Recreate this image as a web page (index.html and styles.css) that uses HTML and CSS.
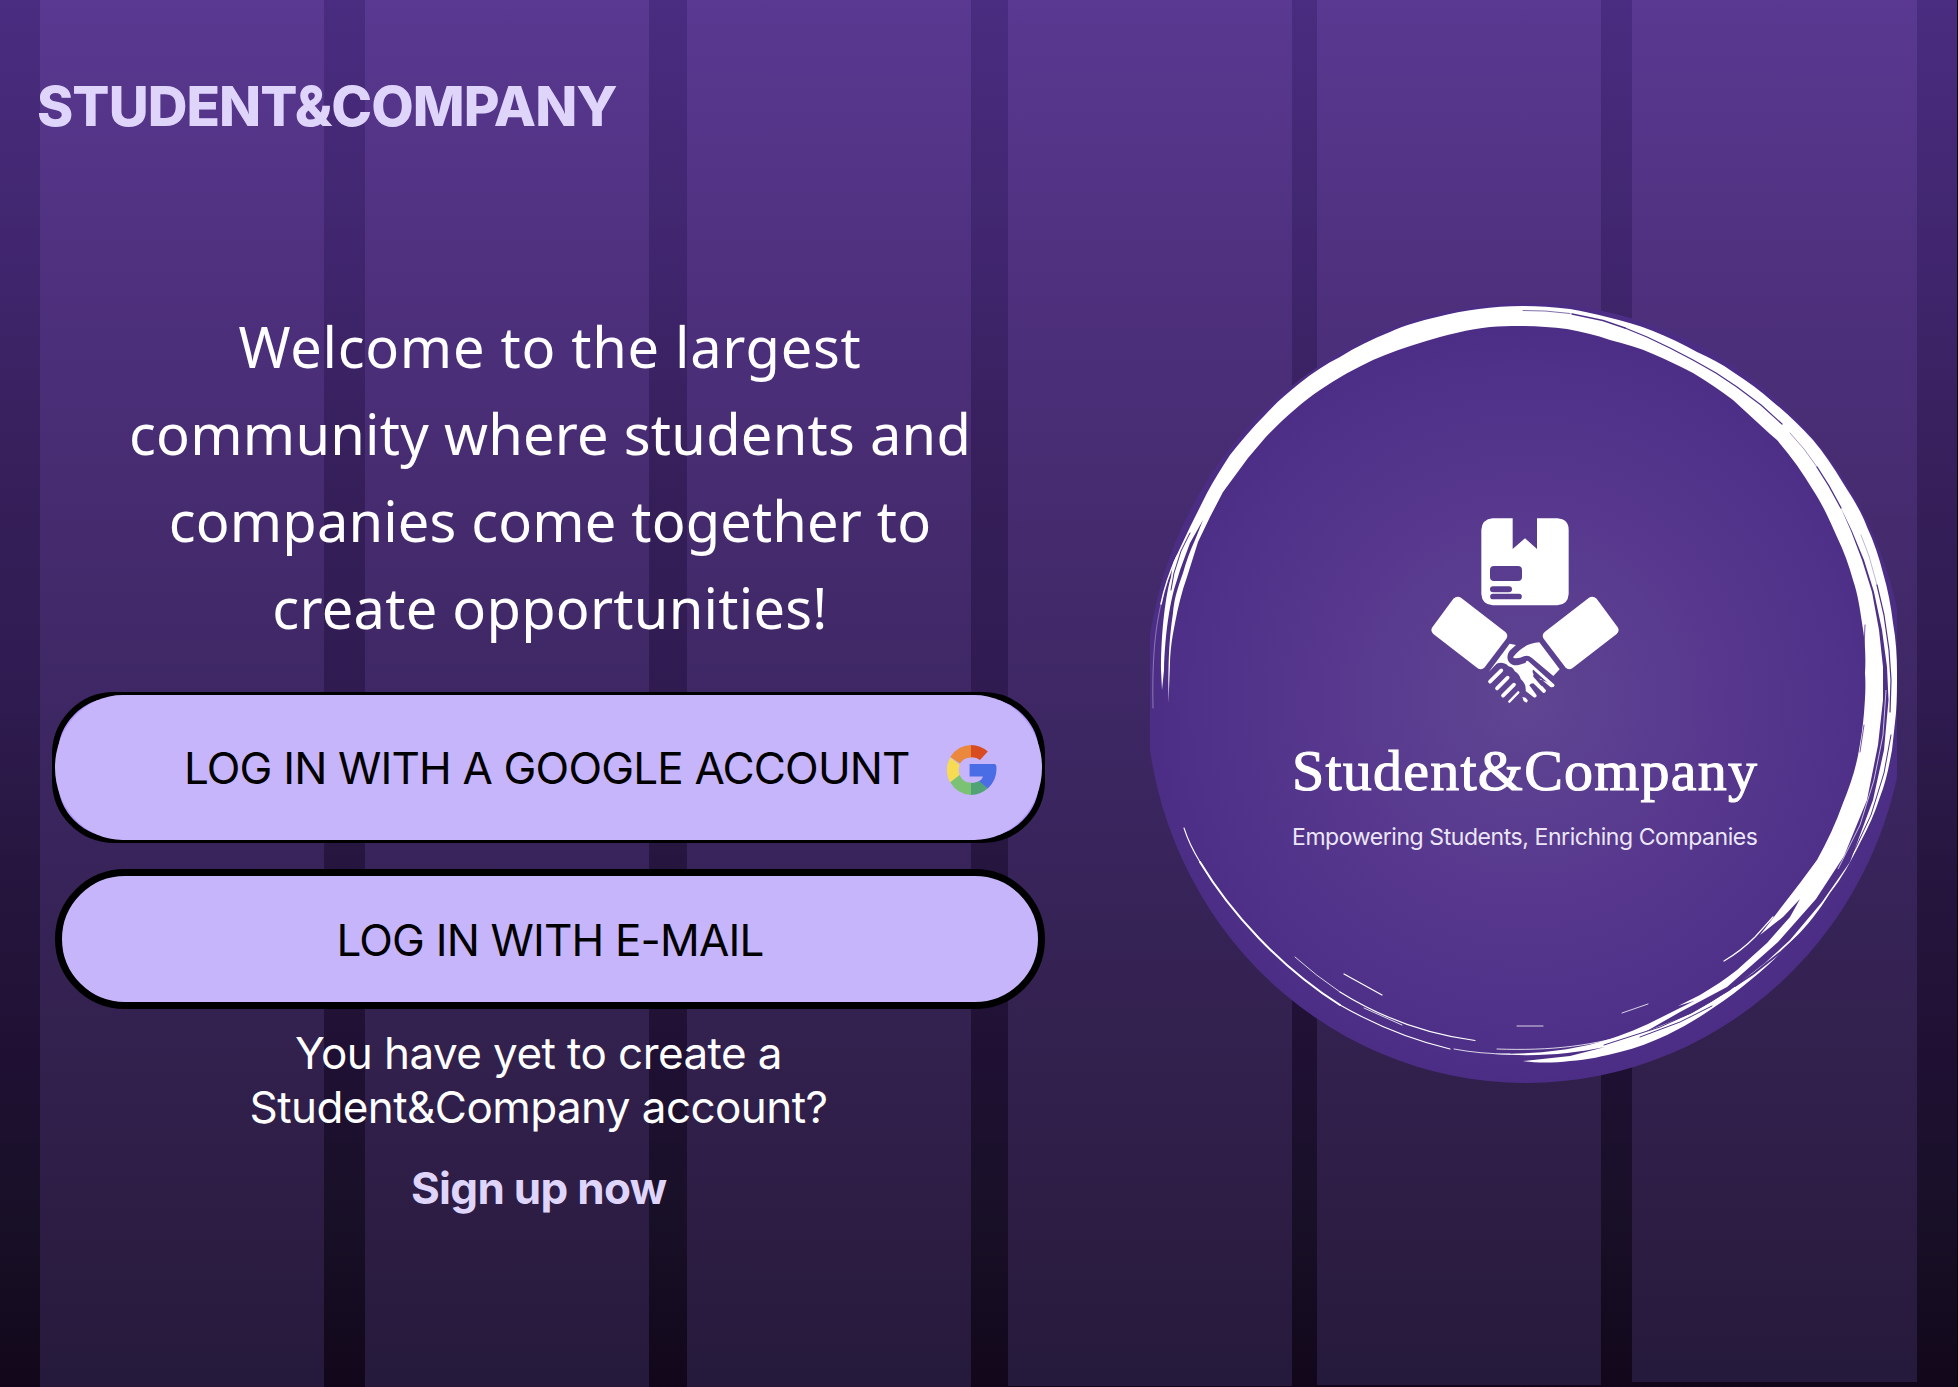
FILE: index.html
```
<!DOCTYPE html>
<html lang="en">
<head>
<meta charset="utf-8">
<title>Student&amp;Company</title>
<link rel="stylesheet" href="styles.css">
</head>
<body>
<div class="page">
  <main class="login">
    <h1 class="brand">STUDENT&amp;COMPANY</h1>
    <p class="welcome">
      <span class="w1">Welcome to the largest</span>
      <span class="w2">community where students and</span>
      <span class="w3">companies come together to</span>
      <span class="w4">create opportunities!</span>
    </p>
    <button class="btn btn-google"><span>LOG IN WITH A GOOGLE ACCOUNT</span>
      <svg class="g-icon" viewBox="-25 -25 50 50">
        <path fill="#ea883e" d="M0-25A25 25 0 0 0-20.7-13L-11-6.6A12.6 12.6 0 0 1 0-12.6Z"/>
        <path fill="#d94c22" d="M0-25A25 25 0 0 1 16.8-18.4L9-10A12.6 12.6 0 0 0 0-12.6Z"/>
        <path fill="#f7dc53" d="M-20.7-12.6A25 25 0 0 0-20.7 12.6L-11.3 5A12.6 12.6 0 0 1-11.3-5Z"/>
        <path fill="#7cc274" d="M-20.7 12.3A25 25 0 0 0 0 25V12.8A12.6 12.6 0 0 1-11.3 5Z"/>
        <path fill="#51a376" d="M0 25A25 25 0 0 0 16.6 18.6L8.5 10.8A13 13 0 0 1 0 12.8Z"/>
        <path fill="#4a6de5" d="M-1.4-6H23.5Q25.3-6 25.4-3.500C26 6 22.500 13.500 16.600 18.600L8.200 11.300Q11.200 9.500 12 6.400H-1.400Z"/>
      </svg>
    </button>
    <button class="btn btn-mail"><span>LOG IN WITH E-MAIL</span></button>
    <p class="hint"><span>You have yet to create a</span><span>Student&amp;Company account?</span></p>
    <a class="signup">Sign up now</a>
  </main>
  <aside class="badge">
    <svg viewBox="1150 300 750 785" width="750" height="785">
      <defs>
        <radialGradient id="disc" gradientUnits="userSpaceOnUse" cx="1525" cy="700" r="385">
          <stop offset="0" stop-color="#5f4592"/><stop offset=".5" stop-color="#57388e"/>
          <stop offset=".85" stop-color="#4f3189"/><stop offset="1" stop-color="#4c2d85"/>
        </radialGradient>
        <clipPath id="sides"><rect x="1150" y="300" width="747" height="790"/></clipPath>
      </defs>
      <ellipse cx="1526" cy="693" rx="380" ry="390" fill="url(#disc)" clip-path="url(#sides)"/>

      <!-- brush ring -->
      <path fill="#fff" d="M1523 306C1492 306 1465 310 1437 317C1420 321 1405 325 1390 332C1372 339 1356 347 1340 357C1326 364 1312 373 1300 383C1287 393 1276 403 1265 415C1252 428 1241 441 1230 455C1222 467 1214 480 1207 493L1190 527L1173 563L1171 577C1166 593 1161 630 1161 670L1162 690L1164 670C1165 633 1170 600 1177 580C1181 566 1186 554 1190 543L1203 520L1195 540C1190 551 1186 562 1183 573C1177 590 1174 600 1173 613C1170 634 1168 652 1168.500 703L1170 663C1171 640 1174 630 1175 623C1178 607 1182 591 1187 577L1198 542L1210 517L1223 492L1248 458L1265 438C1282 420 1302 402 1320 390C1337 378 1356 368 1373 360C1389 353 1406 347 1423 342C1445 335 1470 329 1490 327C1518 325 1542 326 1567 329C1582 332 1596 335 1610 340C1625 344 1640 348 1653 354C1667 360 1680 366 1693 373C1708 382 1721 391 1733 400L1770 434L1777 440C1791 456 1803 473 1813 490C1823 505 1830 521 1837 537C1844 551 1849 566 1853 580C1858 595 1860 609 1862 623C1865 640 1866 656 1865 673C1866 687 1865 700 1864 713C1863 726 1861 738 1859 750C1856 768 1850 786 1843 803C1836 823 1827 842 1817 860L1800 883L1760 935L1783 917L1800 899L1790 917L1767 943L1737 970C1726 979 1713 987 1700 995L1678 1006L1694 1001L1648 1024C1600 1046 1560 1054 1493 1054C1540 1057 1570 1054 1605 1047L1570 1056L1523 1061C1536 1063 1553 1063 1570 1061C1587 1060 1604 1056 1620 1052C1636 1048 1652 1042 1667 1035C1683 1027 1699 1018 1713 1008C1727 999 1740 989 1753 978C1767 967 1780 954 1793 940C1807 926 1819 911 1830 893C1842 878 1851 861 1860 843C1868 828 1875 813 1880 797C1886 782 1889 766 1892 750L1896 713C1897 699 1897 686 1897 673C1897 656 1896 640 1893 623C1891 606 1888 590 1883 573C1879 557 1874 542 1867 527C1861 511 1852 497 1843 483C1834 468 1824 453 1813 440C1801 427 1788 414 1773 402C1761 391 1747 381 1733 372C1722 364 1710 358 1697 352C1683 344 1668 337 1653 331C1638 325 1623 321 1607 317C1595 314 1583 311 1570 309C1553 307 1537 306 1523 306Z"/>

      <!-- gaps between the bristles -->
      <path fill="#4e3088" d="M1840 506L1852 531L1864 560L1874 592L1882 630L1887 667L1888.500 700L1884 750L1873 800L1850 862L1822 902L1790 940L1765 963L1729 991L1690 1014L1645 1032L1680 1012L1727 987L1760 958L1778 942L1816 899L1844 856L1867 800L1878 745L1883 700L1883 667L1879 630L1872 592L1862 560L1851 531Z"/>
      <g fill="none" stroke="#4e3088" stroke-linecap="round" stroke-linejoin="round">
        <path stroke-width=".7" d="M1523 310.500L1545 311L1570 313.500"/>
        <path stroke-width="1.500" d="M1572 314L1603 320.500L1625 328"/>
        <path stroke-width="1.200" d="M1625 328L1647 337L1670 348L1693 360L1716 373L1737 387L1761 405L1782 424"/>
        <path stroke-width=".5" d="M1790 433L1804 449L1817 467"/>
        <path stroke-width="1.400" d="M1817 467L1829 486L1841 508"/>
        <path stroke-width=".5" opacity=".7" d="M1861 535L1869 556L1877 585"/>
        <path stroke-width="1.200" d="M1877 585L1884 615L1889 650L1891 680L1890 712"/>
        <path stroke-width="2" d="M1856 858L1834 893L1807 928L1781 952L1753 974L1735 986"/>
        <path stroke-width="1" d="M1891 735L1884 773L1871 815L1856 847L1841 873M1735 986L1712 1001L1693 1012L1660 1027L1604 1045M1712 1006L1680 1022L1640 1037"/>
        <path stroke-width=".8" d="M1865 625L1863.500 660M1864 725L1860 752"/>
        <path stroke-width="1" d="M1190 533L1181 551L1174 573L1171 590"/>
      </g>
      <path fill="none" stroke="#fff" stroke-width=".7" d="M1886 690L1883 735L1874 780L1860 825L1838 869"/>

      <!-- loose strokes -->
      <g fill="none" stroke="#fff" stroke-linecap="round">
        <path stroke-width="1.500" d="M1177 556Q1166 580 1161 604"/>
        <path stroke-width=".6" opacity=".6" d="M1161 604C1155 630 1152 660 1153 708"/>
        <path stroke-width="1.100" d="M1184 828Q1189 844 1200 862M1340 1005C1375 1025 1412 1040 1450 1049"/>
        <path stroke-width="2" d="M1200 862C1230 912 1280 967 1340 1005"/>
        <path stroke-width=".8" d="M1454 1049Q1480 1054 1510 1054M1295 957Q1315 975 1340 992M1364 1008L1402 1025M1517 1026H1543M1497 1049C1550 1051 1595 1046 1640 1031M1622 1013L1648 1004"/>
        <path stroke-width="1.200" d="M1340 992C1380 1017 1425 1034 1475 1040.500M1344 974L1382 995M1724 961Q1741 951 1755 937L1773 917"/>
      </g>

      <!-- parcel above a handshake -->
      <g transform="translate(1410 500) scale(.33333)" fill="#fff" stroke-linecap="round" stroke-linejoin="round">
        <path fill-rule="evenodd" d="M248 55H308V147L345 115L381 147V55H442Q476 58 476 89V282Q474 314 442 316H248Q216 314 214 282V89Q216 58 248 55ZM252 198Q240 198 240 210V231Q240 243 252 243H324Q336 243 336 231V210Q336 198 324 198ZM249 259A9 9 0 0 0 249 277H297A9 9 0 0 0 297 259ZM249 281A8.500 8.500 0 0 0 249 298H327A8.500 8.500 0 0 0 327 281Z"/>
        <path d="M130 296Q142 285 154 294L286 396Q296 405 289 416L224 502Q214 513 202 504L70 402Q60 393 67 382Z"/>
        <path d="M560 296Q548 285 536 294L404 396Q394 405 401 416L466 502Q476 513 488 504L620 402Q630 393 623 382Z"/>
        <path d="M388 427L449 508L430 528L365 473Q354 464 342 469Q325 477 311 474Q308 472 312 468Q342 430 388 427Z"/>
        <path d="M299 431L318 435L299 452C282 477 300 501 326 495L351 487L372 505C363 514 370 524 379 534L432 554Q430 565 421 561L393 537Q383 535 381 541L408 571Q407 582 399 578L370 550Q361 550 358 556L380 586Q380 595 371 592L347 573Q349 551 332 537C330 524 319 518 314 513C307 497 298 502 294 497C284 487 269 487 260 491L236 516Z"/>
        <path d="M352 487L429 556" stroke="#fff" stroke-width="9" fill="none"/>
        <path d="M347 593L337 591L341 603L349 608L354 602Z"/>
        <path fill="none" stroke="#fff" stroke-width="11" d="M274 511L240 545M293 533L261 565M312 554L279 587"/>
        <path fill="none" stroke="#fff" stroke-width="7" d="M325 577L298 605"/>
        <path fill="none" stroke="#5c4191" stroke-width="9" d="M374 528L396 553"/>
      </g>
      <text class="logo-name" x="1292" y="790" textLength="465">Student&amp;Company</text>
      <text class="logo-tag" x="1292" y="845" textLength="466">Empowering Students, Enriching Companies</text>
    </svg>
  </aside>
</div>
</body>
</html>
```
FILE: styles.css
```
* { box-sizing: border-box; }

body {
  --stripe: linear-gradient(#593991, #4e307e 20%, #452b6e 38%, #3b2660 56%, #33214f 74%, #2c1c42 90%, #251a3b);
  margin: 0;
  background:
    linear-gradient(#05010a, #05010a) 1957px 0 / 1px 1387px no-repeat,
    var(--stripe) 40px 0 / 284px 1387px no-repeat,
    var(--stripe) 365px 0 / 284px 1387px no-repeat,
    var(--stripe) 687px 0 / 284px 1387px no-repeat,
    var(--stripe) 1008px 0 / 284px 1386px no-repeat,
    var(--stripe) 1317px 0 / 284px 1385px no-repeat,
    var(--stripe) 1632px 0 / 285px 1382px no-repeat,
    linear-gradient(#4a2c80, #3f256c 20%, #361f5a 34%, #2f1b50 50%, #26163f 62%, #1f1033 76%, #181027 88%, #12071a);
  font-family: Inter, "Liberation Sans", sans-serif;
  color: #fff;
}

.page {
  width: 1958px;
  height: 1387px;
  display: flex;
  overflow: hidden;
}

.login {
  width: 1150px;
  display: flex;
  flex-direction: column;
  align-items: flex-start;
}

.brand {
  margin: 73px 0 0 37px;
  font-size: 55px;
  line-height: 67px;
  font-weight: 800;
  letter-spacing: -.95px;
  color: #dfd5fb;
  white-space: nowrap;
}

.welcome {
  width: 1100px;
  margin: 163px 0 0;
  font-family: "Noto Sans", sans-serif;
  font-size: 56px;
  line-height: 87px;
}

.welcome span, .hint span {
  display: block;
  width: max-content;
  margin: 0 auto;
  white-space: nowrap;
}

.welcome .w1 { letter-spacing: .7px; }
.welcome .w2 { letter-spacing: .25px; }
.welcome .w3 { letter-spacing: .15px; }
.welcome .w4 { letter-spacing: .25px; }

.btn {
  position: relative;
  display: flex;
  align-items: center;
  padding: 2px 0 0;
  border: 6px solid #000;
  font: 400 44px/54px Inter, sans-serif;
  letter-spacing: -.83px;
  color: #000;
  white-space: nowrap;
}

.btn-google {
  width: 993px;
  height: 151px;
  margin: 41px 0 0 52px;
  padding: 1px 43px 0 126px;
  justify-content: space-between;
  border-radius: 62px;
  background: #b297fb;
}

/* lighter face laid over the rim */
.btn-google::before {
  content: "";
  position: absolute;
  inset: -3px;
  border-radius: 68px / 73px;
  background: #c6b5fa;
}

.btn-google span, .g-icon { position: relative; }

.g-icon {
  width: 50px;
  height: 50px;
  margin-top: 4px;
  overflow: visible;
}

.btn-mail {
  width: 990px;
  height: 140px;
  margin: 26px 0 0 55px;
  justify-content: center;
  border-width: 7px;
  border-radius: 70px;
  background: #c6b5fa;
}

.hint {
  width: 1077px;
  margin: 17px 0 0;
  font-size: 44px;
  font-weight: 400;
  letter-spacing: -.58px;
  line-height: 54px;
}

.signup {
  margin: 27px 0 0 411px;
  font-size: 44px;
  line-height: 54px;
  font-weight: 700;
  letter-spacing: -.7px;
  color: #dfd5fb;
  white-space: nowrap;
}

.badge { padding-top: 300px; }
.badge svg { display: block; }

.logo-name {
  font: 400 58px "Liberation Serif", serif;
  fill: #fff;
  stroke: #fff;
  stroke-width: 1.1px;
}

.logo-tag {
  font: 400 23px Inter, sans-serif;
  fill: #ece6f7;
}
```
